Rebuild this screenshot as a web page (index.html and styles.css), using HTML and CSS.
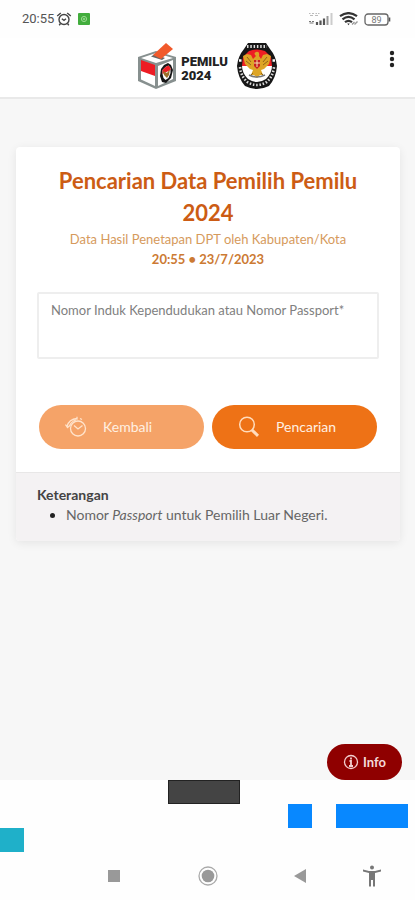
FILE: index.html
```html
<!DOCTYPE html>
<html lang="id">
<head>
<meta charset="UTF-8">
<meta name="viewport" content="width=device-width, initial-scale=1.0">
<title>Pencarian Data Pemilih Pemilu 2024</title>
<link rel="stylesheet" href="styles.css">
</head>
<body>

<div class="status-bar">
  <span class="status-time">20:55</span>
  <svg class="status-alarm" width="16" height="16" viewBox="0 0 16 16" fill="none" stroke="#444" stroke-width="1.4">
    <circle cx="8" cy="8.5" r="5"/>
    <path d="M1.2 5 4.8 2M14.8 5 11.2 2M4.5 12.5 3.2 14.2M11.5 12.5l1.3 1.7M5.8 7.8 8 9.4l2-1.6"/>
  </svg>
  <svg class="status-app" width="12" height="12" viewBox="0 0 12 12">
    <rect width="12" height="12" rx="1" fill="#42ad3d"/>
    <circle cx="6" cy="6" r="2.6" fill="none" stroke="#9bdc92"/>
    <path d="M4.8 6h2.4M6 4.8v2.4" stroke="#9bdc92"/>
  </svg>
  <div class="status-right">
    <svg width="26" height="14" viewBox="0 0 26 14">
      <path d="M1 1.5h1.5M4 1.5h2M7.5 1.5h1.5M10 1.5h1.5M2 3.5h3M7 3.5h3" stroke="#bbb"/>
      <path d="M1 9.5h2M4 9.5h2M1.5 11h4" stroke="#777" stroke-width="1.2"/>
      <path d="M9 10v3M12.5 8.5v4.5M16 6.5v6.5" stroke="#555" stroke-width="2.2"/>
      <path d="M19.5 4v9" stroke="#999" stroke-width="2"/>
      <path d="M23.5 1v12" stroke="#ccc" stroke-width="2"/>
    </svg>
    <svg width="20" height="14" viewBox="0 0 20 14" fill="none" stroke="#333" stroke-width="2.2">
      <path d="M1 4.2Q9.500-2 18 4.200M3.500 7.300Q9.500 2.300 15.500 7.300M6 10.200Q9.500 7.400 13 10.200"/>
      <path d="M8.300 11.500h2.400l-1.200 1.800z" fill="#333" stroke="none"/>
      <path d="M13 12.500l2.500-2.500M15.500 12.500l3-3" stroke="#999" stroke-width="1.400"/>
    </svg>
    <svg width="27" height="13" viewBox="0 0 27 13">
      <rect x="1" y="1" width="23" height="11" rx="3" fill="#fff" stroke="#666" stroke-width="1.300"/>
      <path d="M25.500 4.500v4" stroke="#555" stroke-width="1.600"/>
      <text x="12.500" y="9.800" text-anchor="middle" class="battery-text">89</text>
    </svg>
  </div>
</div>

<header class="header">
  <div class="brand">
    <svg width="40" height="48" viewBox="0 0 40 48">
      <path d="M1 15 19 9l20 6v24l-20 8L1 39z" fill="#87908f"/>
      <path d="M4 16 19 11l17 5-17 5z" fill="#fff"/>
      <path d="M4 19l14 5v20L4 37.500z" fill="#fff"/>
      <path d="M4 18l14 5v11L4 29z" fill="#ed1c24"/>
      <path d="M21 24l15-6v19l-15 7z" fill="#fff"/>
      <path d="M14 14.500l11 3.500 3-2-10-4z" fill="#666"/>
      <path d="M16 13 29 1l7 6-12 10z" fill="#f15a2b"/>
      <path d="M24 27l3-4 4-2 3 2 2 5-2 8-5 5-4-1-2-6z" fill="#171717"/>
      <path d="M25.500 28l3-3 3-1.500 2 2.500v5l-2 5-3 2-2-2-1-4z" fill="#fff"/>
      <path d="M25.500 28l3-3 3-1.500 2 2.500v2l-8 4z" fill="#ed1c24"/>
      <path d="M26 29l4 2 3-4-1 6-2 3-3-3z" fill="#9c7029"/>
    </svg>
    <div class="brand-text">PEMILU<br>2024</div>
    <svg class="emblem" width="42" height="48" viewBox="0 0 42 48">
      <path d="M12 1h18l4 6q6 7 7 17-1 12-8 20-12 6-24 0-7-8-8-20 1-10 7-17z" fill="#171717"/>
      <path d="M6 24l1-9 6-6q8-3 16 0l6 6 1 9z" fill="#ed2024"/>
      <path d="M6 24h30q0 7-6 13-9 6-18 0-6-6-6-13z" fill="#fff"/>
      <path d="M11 4.500h20" stroke="#ddd" stroke-width="3" stroke-dasharray="1.500 1.800"/>
      <path d="M4 25q1 10 8 15.500 9 5 18 0 7-5.500 8-15.500" fill="none" stroke="#ddd" stroke-width="2.600" stroke-dasharray="1.500 1.800"/>
      <path d="M3 18.500h2.500M36.500 18.500H39" stroke="#fff" stroke-width="2.500"/>
      <path d="M20 14q-3-3 0-4 4-1 3 4l2 3 2-4 4-1 4 2-2 8-5 5-3 1 2 5h-3l-3 3-3-3h-3l2-5-3-1-5-5-2-8 4-2 4 1 2 4z" fill="#dda526"/>
      <path d="M11 15l4 5M10 19l5 4M31 15l-4 5M32 19l-5 4M17 31l-3 3M25 31l3 3" stroke="#926518"/>
      <path d="M18 18h6v6l-3 3-3-3z" fill="#c92020"/>
      <path d="M21 18v7M18 21h6" stroke="#f5e3b0"/>
      <path d="M13 33q8 4 16 0" fill="none" stroke="#777" stroke-width="1.500"/>
    </svg>
  </div>
  <button class="menu-btn" type="button" aria-label="Menu">
    <svg width="6" height="18" viewBox="0 0 6 18" fill="#222">
      <circle cx="3" cy="3" r="2.2"/><circle cx="3" cy="9" r="2.2"/><circle cx="3" cy="15" r="2.2"/>
    </svg>
  </button>
</header>

<main class="main">
  <form class="card">
    <div class="card-body">
      <h1 class="title">Pencarian Data Pemilih Pemilu 2024</h1>
      <p class="subtitle">Data Hasil Penetapan DPT oleh Kabupaten/Kota</p>
      <p class="updated">20:55 &bull; 23/7/2023</p>

      <div class="field">
        <label for="nik">Nomor Induk Kependudukan atau Nomor Passport*</label>
        <input id="nik" name="nik" type="text" required>
      </div>

      <div class="actions">
        <button class="btn btn-back" type="button">
          <svg width="22" height="22" viewBox="0 0 22 22" fill="none" stroke="#ffe3cb" stroke-width="1.3">
            <circle cx="13" cy="12.5" r="7.5"/>
            <path d="M9 9.5l4 3.500 4.500-3.500M2 10.500Q4 3 12 2.500M4.500 10Q6 5.500 11 4M.500 8.500l2 3 3-2.500M12 .800v3M15 2.500l2 1"/>
          </svg>
          <span>Kembali</span>
        </button>
        <button class="btn btn-search" type="submit">
          <svg width="22" height="22" viewBox="0 0 22 22" fill="none" stroke="#ffdcbc">
            <circle cx="9" cy="8.5" r="7.3" stroke-width="1.5"/>
            <path d="M13.8 13.8l6.2 6" stroke-width="3"/>
          </svg>
          <span>Pencarian</span>
        </button>
      </div>
    </div>

    <div class="card-footer">
      <h2>Keterangan</h2>
      <ul>
        <li>Nomor <em>Passport</em> untuk Pemilih Luar Negeri.</li>
      </ul>
    </div>
  </form>

  <button class="info-btn" type="button">
    <svg width="16" height="16" viewBox="0 0 16 16" fill="none" stroke="#f3cfcf">
      <circle cx="8" cy="8" r="6.5" stroke-width="1.3"/>
      <path d="M8 3.5v2M6.500 7H8v5M6 12h4" stroke-width="1.8"/>
    </svg>
    <span>Info</span>
  </button>
</main>

<div class="blocks">
  <div class="block block-dark"></div>
  <div class="block block-blue"></div>
  <div class="block block-blue block-wide"></div>
  <div class="block block-teal"></div>
</div>

<nav class="system-nav">
  <button type="button" aria-label="Recent apps">
    <svg width="20" height="20" viewBox="0 0 20 20"><path d="M4 4h12v12H4z" fill="#999"/></svg>
  </button>
  <button type="button" aria-label="Home">
    <svg width="20" height="20" viewBox="0 0 20 20"><circle cx="10" cy="10" r="9" fill="none" stroke="#aaa" stroke-width="1.3"/><circle cx="10" cy="10" r="6.3" fill="#999"/></svg>
  </button>
  <button type="button" aria-label="Back">
    <svg width="20" height="20" viewBox="0 0 20 20"><path d="M3 10 15 3v14z" fill="#999"/></svg>
  </button>
  <button type="button" aria-label="Accessibility">
    <svg width="20" height="22" viewBox="0 0 20 22" fill="#777"><circle cx="10" cy="2.5" r="2"/><path d="M1 4.5l6 1.500h6l6-1.500v2L13 8v13.500h-2V15H9v6.500H7V8L1 6.500z"/></svg>
  </button>
</nav>

</body>
</html>
```

FILE: styles.css
```css
* {
  margin: 0;
  padding: 0;
  box-sizing: border-box;
}

body {
  display: flex;
  flex-direction: column;
  min-height: 100vh;
  background: #fefefe;
  color: #666;
  font-family: Lato, sans-serif;
  font-size: 13px;
  line-height: 20px;
}

button {
  border: none;
  background: none;
  font: inherit;
  cursor: pointer;
}

svg {
  display: block;
  flex: none;
}

/* status bar */
.status-bar {
  display: flex;
  align-items: center;
  gap: 2px;
  height: 38px;
  padding: 0 24px 0 22px;
}

.status-time {
  font-family: Roboto, sans-serif;
  color: #555;
}

.status-app {
  margin-left: 4px;
}

.status-right {
  display: flex;
  align-items: center;
  gap: 5px;
  margin-left: auto;
}

.battery-text {
  font: 9px Roboto, sans-serif;
  fill: #777;
}

/* header */
.header {
  position: relative;
  display: flex;
  justify-content: center;
  height: 61px;
  padding-top: 4px;
  border-bottom: 2px solid #e9e9e9;
  background: #fff;
}

.brand {
  display: flex;
  align-items: center;
  gap: 4px;
  height: 48px;
}

.brand-text {
  padding-top: 6px;
  color: #222;
  font-family: Roboto, sans-serif;
  font-size: 13px;
  font-weight: 900;
  line-height: 14px;
}

.emblem {
  margin-left: 4px;
}

.menu-btn {
  position: absolute;
  top: 8px;
  right: 16px;
  padding: 4px;
}

/* main */
.main {
  position: relative;
  flex: 1;
  padding: 48px 15px 48px 16px;
  background: #f7f7f7;
}

.card {
  border-radius: 4px;
  background: #fff;
  box-shadow: 0 2px 10px rgba(0, 0, 0, 0.08);
}

.card-body {
  padding: 18px 21px 23px;
  text-align: center;
}

.title {
  color: #cc5c14;
  font-size: 22px;
  font-weight: 700;
  line-height: 32px;
}

.subtitle {
  color: #d69a5c;
}

.updated {
  color: #cc7a33;
  font-weight: 700;
}

.field {
  margin-top: 23px;
  padding: 6px 12px;
  border: 2px solid #eee;
  border-radius: 2px;
  text-align: left;
}

.field label {
  display: block;
  color: #808080;
}

.field input {
  display: block;
  width: 100%;
  height: 31px;
  border: none;
  outline: none;
  background: none;
  font: inherit;
}

.actions {
  display: flex;
  gap: 8px;
  margin-top: 46px;
  padding: 0 2px;
}

.btn {
  display: flex;
  flex: 1;
  align-items: center;
  gap: 16px;
  height: 44px;
  padding: 0 26px;
  border-radius: 22px;
  color: #fff0e2;
  font-size: 14px;
}

.btn-back {
  background: #f5a368;
}

.btn-search {
  background: #ee7216;
}

.card-footer {
  padding: 12px 21px 16px;
  border-top: 1px solid #e8e7e7;
  border-radius: 0 0 4px 4px;
  background: #f4f2f3;
  font-size: 14px;
}

.card-footer h2 {
  color: #444;
  font-size: 14px;
  font-weight: 700;
}

.card-footer ul {
  padding-left: 29px;
}

.card-footer li::marker {
  color: #222;
}

.info-btn {
  position: absolute;
  right: 13px;
  bottom: 0;
  display: flex;
  align-items: center;
  justify-content: center;
  gap: 4px;
  width: 75px;
  height: 36px;
  border-radius: 18px;
  background: #8f0000;
  color: #f3dada;
  font-weight: 700;
}

/* coloured blocks, 24px tiles */
.blocks {
  display: grid;
  grid-template-columns: repeat(17, 24px);
  grid-template-rows: repeat(3, 24px);
}

.block-dark {
  grid-area: 1 / 8 / 2 / 11;
  border: 1px solid #222;
  background: #444;
}

.block-blue {
  grid-area: 2 / 13 / 3 / 14;
  background: #0888ff;
}

.block-wide {
  grid-area: 2 / 15 / 3 / 18;
}

.block-teal {
  grid-area: 3 / 1 / 4 / 2;
  background: #1fb0c9;
}

/* system navigation */
.system-nav {
  display: flex;
  height: 48px;
  padding: 0 20px 0 67px;
}

.system-nav button {
  display: flex;
  flex: 2;
  align-items: center;
  justify-content: center;
}

.system-nav button:last-child {
  flex: 1;
}
```
